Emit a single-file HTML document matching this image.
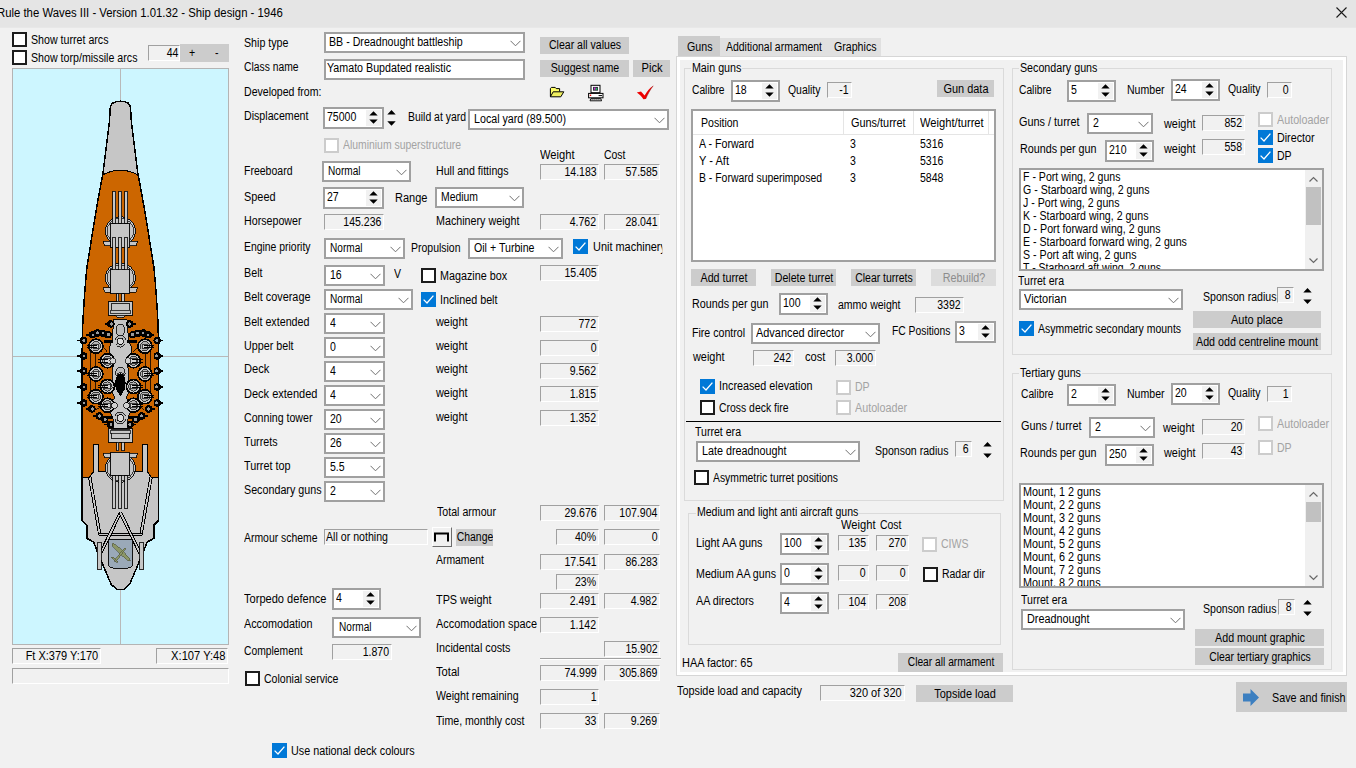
<!DOCTYPE html>
<html lang="en"><head><meta charset="utf-8"><title>Rule the Waves III - Ship design</title>
<style>
html,body{margin:0;padding:0}
body{width:1356px;height:768px;overflow:hidden;background:#f1f1f1;position:relative;font:12px/14px "Liberation Sans",sans-serif;color:#000}
body *{box-sizing:border-box}
div,span.t,svg.abs,i{position:absolute}
.t{white-space:nowrap;font:12px/14px "Liberation Sans",sans-serif;transform:scaleX(.878);transform-origin:0 0;display:block}
.t.r{transform-origin:100% 0}
.t.g{color:#a3a3a3}
.t.gl{background:#f1f1f1;padding:0 1px;margin-left:-1px}
#title{left:0;top:0;width:1356px;height:28px;background:#e5e5e5;border-bottom:1px solid #e8e8e8}
#title .tt{position:absolute;left:-3px;top:5px;font:12px/16px "Liberation Sans",sans-serif;white-space:nowrap;transform:scaleX(.945);transform-origin:0 0}
#close{position:absolute;left:1336px;top:7px}
.cb,.sp,.inp,.lb{border:2px solid #a0a0a0;background:#fff;overflow:hidden}
.chev{position:absolute;right:2.5px;top:5.5px}
.sp .sb{right:1px;top:1px;bottom:1px;width:15px;background:#f1f1f1}
.sp .arr{position:absolute;left:3px;top:0px}
.ro{border:1px solid;border-color:#a0a0a0 #fff #fff #a0a0a0;background:#f1f1f1;overflow:hidden}
.btn{background:#cccccc;overflow:hidden}
.btn .c{position:absolute;left:50%;top:50%;white-space:nowrap;transform:translate(-50%,-50%) scaleX(.878);line-height:14px}
.btn.dis{background:#dcdcdc;color:#8c8c8c}
.k{background:#fff}
.k0{border:2px solid #1c1c1c}
.k1{background:#0078d7}
.k1 svg{position:absolute;left:0;top:0}
.k2{border:2px solid #cccccc}
.gb{border:1px solid #dadada}
.tab{background:#e0e0e0}
.tab.sel{background:#cccccc}
.tabpanel{background:#fff;border:1px solid #d6d6d6}
.tabinner{left:3px;top:3px;right:3px;bottom:3px;background:#f1f1f1}
.raised{border:1px solid;border-color:#fff #6d6d6d #6d6d6d #fff;background:#f0f0f0}
.hsep{border-top:1px solid #a0a0a0;border-bottom:1px solid #fff}
.bline{background:#000}
.lvh{left:0;top:0;right:0;height:24px;border-bottom:1px solid #e5e5e5;background:#fff}
.lvs{top:0;width:1px;height:24px;background:#e5e5e5}
.sbar{right:0;top:0;bottom:0;width:17px;background:#f0f0f0}
.thumb{left:1px;width:15px;background:#c1c1c1}

</style></head>
<body>
<div id="title"><span class="tt">Rule the Waves III - Version 1.01.32 - Ship design - 1946</span><svg id="close" width="11" height="11" viewBox="0 0 11 11"><path d="M0.5 0.5 L10.5 10.5 M10.5 0.5 L0.5 10.5" stroke="#1a1a1a" stroke-width="1.1" fill="none"/></svg></div>
<!-- left: ship view -->
<div class="k k0" style="left:12px;top:32px;width:15px;height:15px;"></div>
<span class="t " style="left:31px;top:33px;transform:scaleX(0.887)">Show turret arcs</span>
<div class="k k0" style="left:12px;top:50px;width:15px;height:15px;"></div>
<span class="t " style="left:31px;top:51px;transform:scaleX(0.887)">Show torp/missile arcs</span>
<div class="ro" style="left:148px;top:45px;width:32px;height:16px;"><span class="t r" style="right:1px;top:0px">44</span></div>
<div class="btn" style="left:180px;top:44px;width:48.5px;height:17.5px;"><span class="t" style="left:9px;top:2px">+</span><span class="t" style="left:34.5px;top:2px">-</span></div>
<svg id="ship" width="217" height="577" viewBox="12 68 217 577" style="position:absolute;left:12px;top:68px"><rect x="12" y="68" width="217" height="577" fill="#cdf6ff"/><path d="M120.5 68 V101 M120.5 590 V645 M12 356.5 H82 M159 356.5 H229" stroke="#b9b9b9" stroke-width="1" fill="none"/><g shape-rendering="crispEdges"><defs><clipPath id="hc"><path d="M120.4 101.2 L116.4 101.6 L112.8 103 L111.1 105 L110.3 107.5 L109.4 121.5 L107.2 140 L105 157 L103 173 L99.8 190 L97.1 205 L94.6 220 L92.1 235 L89.4 252 L86.8 268 L85.3 285 L84.3 298.8 L83.4 312 L82.7 325 L82.3 345 L82.1 360 L82.1 520.3 L86.8 525 L86.8 538.3 L93.6 542 L97.3 551.5 L101.9 562.5 L111.2 584.4 L116.8 589.4 L124 589.4 L129.6 584.4 L138.9 562.5 L143.5 551.5 L147.2 542 L154 538.3 L154 525 L158.7 520.3 L158.7 360 L158.5 345 L158.1 325 L157.4 312 L156.5 298.8 L155.5 285 L154 268 L151.4 252 L148.7 235 L146.2 220 L143.7 205 L141 190 L137.8 173 L135.8 157 L133.6 140 L131.4 121.5 L130.5 107.5 L129.7 105 L128 103 L124.4 101.6 L120.4 101.2 Z"/></clipPath></defs><path d="M120.4 101.2 L116.4 101.6 L112.8 103 L111.1 105 L110.3 107.5 L109.4 121.5 L107.2 140 L105 157 L103 173 L99.8 190 L97.1 205 L94.6 220 L92.1 235 L89.4 252 L86.8 268 L85.3 285 L84.3 298.8 L83.4 312 L82.7 325 L82.3 345 L82.1 360 L82.1 520.3 L86.8 525 L86.8 538.3 L93.6 542 L97.3 551.5 L101.9 562.5 L111.2 584.4 L116.8 589.4 L124 589.4 L129.6 584.4 L138.9 562.5 L143.5 551.5 L147.2 542 L154 538.3 L154 525 L158.7 520.3 L158.7 360 L158.5 345 L158.1 325 L157.4 312 L156.5 298.8 L155.5 285 L154 268 L151.4 252 L148.7 235 L146.2 220 L143.7 205 L141 190 L137.8 173 L135.8 157 L133.6 140 L131.4 121.5 L130.5 107.5 L129.7 105 L128 103 L124.4 101.6 L120.4 101.2 Z" fill="#c6c6c6"/><path clip-path="url(#hc)" d="M70 176 L102.5 174.8 Q120.4 165.6 138.3 174.8 L170 176 V477 H70 Z" fill="#cc6600"/><path d="M102.8 174.8 Q120.4 165.6 138 174.8" fill="none" stroke="#000" stroke-width="1"/><path clip-path="url(#hc)" d="M82 477.3 L89.5 477.3 L93.4 471.7 L93.4 444.7 L98.8 444.7 L98.8 471.7 L142.1 471.7 L142.1 444.7 L147.5 444.7 L147.5 471.7 L151.3 477.3 L159 477.3 L159 500 L82 500 Z" fill="#c6c6c6"/><path clip-path="url(#hc)" d="M82 477.3 L89.5 477.3 L93.4 471.7 L93.4 444.7 L98.8 444.7 L98.8 471.7 L142.1 471.7 L142.1 444.7 L147.5 444.7 L147.5 471.7 L151.3 477.3 L159 477.3" fill="none" stroke="#000" stroke-width="1.2"/><path d="M120.4 101.2 L116.4 101.6 L112.8 103 L111.1 105 L110.3 107.5 L109.4 121.5 L107.2 140 L105 157 L103 173 L99.8 190 L97.1 205 L94.6 220 L92.1 235 L89.4 252 L86.8 268 L85.3 285 L84.3 298.8 L83.4 312 L82.7 325 L82.3 345 L82.1 360 L82.1 520.3 L86.8 525 L86.8 538.3 L93.6 542 L97.3 551.5 L101.9 562.5 L111.2 584.4 L116.8 589.4 L124 589.4 L129.6 584.4 L138.9 562.5 L143.5 551.5 L147.2 542 L154 538.3 L154 525 L158.7 520.3 L158.7 360 L158.5 345 L158.1 325 L157.4 312 L156.5 298.8 L155.5 285 L154 268 L151.4 252 L148.7 235 L146.2 220 L143.7 205 L141 190 L137.8 173 L135.8 157 L133.6 140 L131.4 121.5 L130.5 107.5 L129.7 105 L128 103 L124.4 101.6 L120.4 101.2 Z" fill="none" stroke="#000" stroke-width="1.5"/><ellipse cx="120.4" cy="231" rx="15.2" ry="14.4" fill="#c6c6c6" stroke="#000" stroke-width="0.9"/><ellipse cx="120.4" cy="231" rx="13.4" ry="12.8" fill="#c6c6c6" stroke="#000" stroke-width="0.7"/><path d="M110.9 241.1 L103.2 241.1 L104.8 245.9 L110.9 245.9 Z" fill="#c6c6c6" stroke="#000" stroke-width="0.8"/><path d="M129.9 241.1 L137.6 241.1 L136 245.9 L129.9 245.9 Z" fill="#c6c6c6" stroke="#000" stroke-width="0.8"/><rect x="110.9" y="223.4" width="19" height="23.6" fill="#c6c6c6" stroke="#000" stroke-width="0.9"/><rect x="112.9" y="191" width="3" height="32.4" fill="#c6c6c6" stroke="#000" stroke-width="0.8"/><rect x="118.9" y="191" width="3" height="32.4" fill="#c6c6c6" stroke="#000" stroke-width="0.8"/><rect x="124.9" y="191" width="3" height="32.4" fill="#c6c6c6" stroke="#000" stroke-width="0.8"/><ellipse cx="120.4" cy="277.5" rx="15.2" ry="14.4" fill="#c6c6c6" stroke="#000" stroke-width="0.9"/><ellipse cx="120.4" cy="277.5" rx="13.4" ry="12.8" fill="#c6c6c6" stroke="#000" stroke-width="0.7"/><path d="M110.9 287.6 L103.2 287.6 L104.8 292.4 L110.9 292.4 Z" fill="#c6c6c6" stroke="#000" stroke-width="0.8"/><path d="M129.9 287.6 L137.6 287.6 L136 292.4 L129.9 292.4 Z" fill="#c6c6c6" stroke="#000" stroke-width="0.8"/><rect x="110.9" y="269.9" width="19" height="23.6" fill="#c6c6c6" stroke="#000" stroke-width="0.9"/><rect x="112.9" y="237.5" width="3" height="32.4" fill="#c6c6c6" stroke="#000" stroke-width="0.8"/><rect x="118.9" y="237.5" width="3" height="32.4" fill="#c6c6c6" stroke="#000" stroke-width="0.8"/><rect x="124.9" y="237.5" width="3" height="32.4" fill="#c6c6c6" stroke="#000" stroke-width="0.8"/><rect x="108.4" y="301.5" width="24.4" height="13.5" fill="#c6c6c6" stroke="#000" stroke-width="0.9"/><rect x="111.6" y="303.5" width="18" height="8.5" fill="#c6c6c6" stroke="#000" stroke-width="0.8"/><rect x="110.4" y="310.1" width="20" height="3.2" fill="#c6c6c6" stroke="#000" stroke-width="0.7"/><path d="M114 315 Q120.4 320.5 126.8 315 Z" fill="#c6c6c6" stroke="#000" stroke-width="0.8"/><rect x="116.7" y="293.6" width="2.2" height="7.9" fill="#c6c6c6" stroke="#000" stroke-width="0.8"/><rect x="121.9" y="293.6" width="2.2" height="7.9" fill="#c6c6c6" stroke="#000" stroke-width="0.8"/><rect x="108.4" y="428.8" width="24.4" height="13.5" fill="#c6c6c6" stroke="#000" stroke-width="0.9"/><rect x="111.6" y="429.8" width="18" height="8.5" fill="#c6c6c6" stroke="#000" stroke-width="0.8"/><rect x="110.4" y="430" width="20" height="3.2" fill="#c6c6c6" stroke="#000" stroke-width="0.7"/><path d="M114 428.8 Q120.4 423.3 126.8 428.8 Z" fill="#c6c6c6" stroke="#000" stroke-width="0.8"/><ellipse cx="120.4" cy="468" rx="15.2" ry="14.4" fill="#c6c6c6" stroke="#000" stroke-width="0.9"/><ellipse cx="120.4" cy="468" rx="13.4" ry="12.8" fill="#c6c6c6" stroke="#000" stroke-width="0.7"/><path d="M110.9 453.1 L103.2 453.1 L104.8 457.9 L110.9 457.9 Z" fill="#c6c6c6" stroke="#000" stroke-width="0.8"/><path d="M129.9 453.1 L137.6 453.1 L136 457.9 L129.9 457.9 Z" fill="#c6c6c6" stroke="#000" stroke-width="0.8"/><rect x="110.9" y="452" width="19" height="23.6" fill="#c6c6c6" stroke="#000" stroke-width="0.9"/><rect x="112.9" y="475.6" width="3" height="32.4" fill="#c6c6c6" stroke="#000" stroke-width="0.8"/><rect x="118.9" y="475.6" width="3" height="32.4" fill="#c6c6c6" stroke="#000" stroke-width="0.8"/><rect x="124.9" y="475.6" width="3" height="32.4" fill="#c6c6c6" stroke="#000" stroke-width="0.8"/><rect x="116.7" y="442.3" width="2.2" height="8.2" fill="#c6c6c6" stroke="#000" stroke-width="0.8"/><rect x="121.9" y="442.3" width="2.2" height="8.2" fill="#c6c6c6" stroke="#000" stroke-width="0.8"/><path d="M113.4 319.5 L127.4 319.5 L128.4 340 L131.4 347 L131.4 352 L126.4 360 L128.8 372 L128.8 392 L126 398 L131.6 404 L131.6 410 L127.6 418 L127.6 428 L113.2 428 L113.2 418 L109.2 410 L109.2 404 L114.8 398 L112 392 L112 372 L114.4 360 L109.4 352 L109.4 347 L112.4 340 Z" fill="#c6c6c6" stroke="#000" stroke-width="0.9"/><path d="M95.1 346 L95.1 398" fill="none" stroke="#000" stroke-width="0.8"/><path d="M90.2 350 L90.2 396" fill="none" stroke="#000" stroke-width="0.8"/><path d="M107.4 352 L96.4 340" fill="none" stroke="#000" stroke-width="0.8"/><path d="M107.4 400 L96.4 410" fill="none" stroke="#000" stroke-width="0.8"/><path d="M145.7 346 L145.7 398" fill="none" stroke="#000" stroke-width="0.8"/><path d="M150.6 350 L150.6 396" fill="none" stroke="#000" stroke-width="0.8"/><path d="M133.4 352 L144.4 340" fill="none" stroke="#000" stroke-width="0.8"/><path d="M133.4 400 L144.4 410" fill="none" stroke="#000" stroke-width="0.8"/><ellipse cx="95.9" cy="346.2" rx="7" ry="7" fill="#c6c6c6" stroke="#000" stroke-width="1.7"/><ellipse cx="95.9" cy="346.2" rx="4.6" ry="4.6" fill="#b4b4b4" stroke="#000" stroke-width="0.7"/><rect x="93.1" y="344" width="5.6" height="4.4" fill="#d6d6d6" stroke="#000" stroke-width="0.7"/><path d="M96.9 345.2 L86.7 345.2" fill="none" stroke="#000" stroke-width="1.0"/><path d="M96.9 347.4 L86.7 347.4" fill="none" stroke="#000" stroke-width="1.0"/><ellipse cx="144.9" cy="346.2" rx="7" ry="7" fill="#c6c6c6" stroke="#000" stroke-width="1.7"/><ellipse cx="144.9" cy="346.2" rx="4.6" ry="4.6" fill="#b4b4b4" stroke="#000" stroke-width="0.7"/><rect x="142.1" y="344" width="5.6" height="4.4" fill="#d6d6d6" stroke="#000" stroke-width="0.7"/><path d="M143.9 345.2 L154.1 345.2" fill="none" stroke="#000" stroke-width="1.0"/><path d="M143.9 347.4 L154.1 347.4" fill="none" stroke="#000" stroke-width="1.0"/><ellipse cx="95.9" cy="374" rx="7" ry="7" fill="#c6c6c6" stroke="#000" stroke-width="1.7"/><ellipse cx="95.9" cy="374" rx="4.6" ry="4.6" fill="#b4b4b4" stroke="#000" stroke-width="0.7"/><rect x="93.1" y="371.8" width="5.6" height="4.4" fill="#d6d6d6" stroke="#000" stroke-width="0.7"/><path d="M96.9 373 L86.7 373" fill="none" stroke="#000" stroke-width="1.0"/><path d="M96.9 375.2 L86.7 375.2" fill="none" stroke="#000" stroke-width="1.0"/><ellipse cx="144.9" cy="374" rx="7" ry="7" fill="#c6c6c6" stroke="#000" stroke-width="1.7"/><ellipse cx="144.9" cy="374" rx="4.6" ry="4.6" fill="#b4b4b4" stroke="#000" stroke-width="0.7"/><rect x="142.1" y="371.8" width="5.6" height="4.4" fill="#d6d6d6" stroke="#000" stroke-width="0.7"/><path d="M143.9 373 L154.1 373" fill="none" stroke="#000" stroke-width="1.0"/><path d="M143.9 375.2 L154.1 375.2" fill="none" stroke="#000" stroke-width="1.0"/><ellipse cx="95.9" cy="396.7" rx="7" ry="7" fill="#c6c6c6" stroke="#000" stroke-width="1.7"/><ellipse cx="95.9" cy="396.7" rx="4.6" ry="4.6" fill="#b4b4b4" stroke="#000" stroke-width="0.7"/><rect x="93.1" y="394.5" width="5.6" height="4.4" fill="#d6d6d6" stroke="#000" stroke-width="0.7"/><path d="M96.9 395.7 L86.7 395.7" fill="none" stroke="#000" stroke-width="1.0"/><path d="M96.9 397.9 L86.7 397.9" fill="none" stroke="#000" stroke-width="1.0"/><ellipse cx="144.9" cy="396.7" rx="7" ry="7" fill="#c6c6c6" stroke="#000" stroke-width="1.7"/><ellipse cx="144.9" cy="396.7" rx="4.6" ry="4.6" fill="#b4b4b4" stroke="#000" stroke-width="0.7"/><rect x="142.1" y="394.5" width="5.6" height="4.4" fill="#d6d6d6" stroke="#000" stroke-width="0.7"/><path d="M143.9 395.7 L154.1 395.7" fill="none" stroke="#000" stroke-width="1.0"/><path d="M143.9 397.9 L154.1 397.9" fill="none" stroke="#000" stroke-width="1.0"/><ellipse cx="107.4" cy="360.8" rx="7" ry="7" fill="#c6c6c6" stroke="#000" stroke-width="1.7"/><ellipse cx="107.4" cy="360.8" rx="4.6" ry="4.6" fill="#b4b4b4" stroke="#000" stroke-width="0.7"/><rect x="104.6" y="358.6" width="5.6" height="4.4" fill="#d6d6d6" stroke="#000" stroke-width="0.7"/><path d="M108.4 359.8 L98.2 359.8" fill="none" stroke="#000" stroke-width="1.0"/><path d="M108.4 362 L98.2 362" fill="none" stroke="#000" stroke-width="1.0"/><ellipse cx="133.4" cy="360.8" rx="7" ry="7" fill="#c6c6c6" stroke="#000" stroke-width="1.7"/><ellipse cx="133.4" cy="360.8" rx="4.6" ry="4.6" fill="#b4b4b4" stroke="#000" stroke-width="0.7"/><rect x="130.6" y="358.6" width="5.6" height="4.4" fill="#d6d6d6" stroke="#000" stroke-width="0.7"/><path d="M132.4 359.8 L142.6 359.8" fill="none" stroke="#000" stroke-width="1.0"/><path d="M132.4 362 L142.6 362" fill="none" stroke="#000" stroke-width="1.0"/><ellipse cx="107.4" cy="386.5" rx="7" ry="7" fill="#c6c6c6" stroke="#000" stroke-width="1.7"/><ellipse cx="107.4" cy="386.5" rx="4.6" ry="4.6" fill="#b4b4b4" stroke="#000" stroke-width="0.7"/><rect x="104.6" y="384.3" width="5.6" height="4.4" fill="#d6d6d6" stroke="#000" stroke-width="0.7"/><path d="M108.4 385.5 L98.2 385.5" fill="none" stroke="#000" stroke-width="1.0"/><path d="M108.4 387.7 L98.2 387.7" fill="none" stroke="#000" stroke-width="1.0"/><ellipse cx="133.4" cy="386.5" rx="7" ry="7" fill="#c6c6c6" stroke="#000" stroke-width="1.7"/><ellipse cx="133.4" cy="386.5" rx="4.6" ry="4.6" fill="#b4b4b4" stroke="#000" stroke-width="0.7"/><rect x="130.6" y="384.3" width="5.6" height="4.4" fill="#d6d6d6" stroke="#000" stroke-width="0.7"/><path d="M132.4 385.5 L142.6 385.5" fill="none" stroke="#000" stroke-width="1.0"/><path d="M132.4 387.7 L142.6 387.7" fill="none" stroke="#000" stroke-width="1.0"/><ellipse cx="107.4" cy="405.3" rx="7" ry="7" fill="#c6c6c6" stroke="#000" stroke-width="1.7"/><ellipse cx="107.4" cy="405.3" rx="4.6" ry="4.6" fill="#b4b4b4" stroke="#000" stroke-width="0.7"/><rect x="104.6" y="403.1" width="5.6" height="4.4" fill="#d6d6d6" stroke="#000" stroke-width="0.7"/><path d="M108.4 404.3 L98.2 404.3" fill="none" stroke="#000" stroke-width="1.0"/><path d="M108.4 406.5 L98.2 406.5" fill="none" stroke="#000" stroke-width="1.0"/><ellipse cx="133.4" cy="405.3" rx="7" ry="7" fill="#c6c6c6" stroke="#000" stroke-width="1.7"/><ellipse cx="133.4" cy="405.3" rx="4.6" ry="4.6" fill="#b4b4b4" stroke="#000" stroke-width="0.7"/><rect x="130.6" y="403.1" width="5.6" height="4.4" fill="#d6d6d6" stroke="#000" stroke-width="0.7"/><path d="M132.4 404.3 L142.6 404.3" fill="none" stroke="#000" stroke-width="1.0"/><path d="M132.4 406.5 L142.6 406.5" fill="none" stroke="#000" stroke-width="1.0"/><ellipse cx="120.4" cy="341.3" rx="5.4" ry="5.8" fill="#b9b9b9" stroke="#000" stroke-width="0.8"/><ellipse cx="120.4" cy="341.3" rx="3.2" ry="3.2" fill="#dcdcdc" stroke="#000" stroke-width="0.8"/><ellipse cx="120.4" cy="418" rx="5.6" ry="6" fill="#b9b9b9" stroke="#000" stroke-width="0.8"/><ellipse cx="120.4" cy="418" rx="3.4" ry="3.4" fill="#dcdcdc" stroke="#000" stroke-width="0.8"/><ellipse cx="112.8" cy="360.8" rx="3" ry="3" fill="#d2d2d2" stroke="#000" stroke-width="0.7"/><ellipse cx="114.4" cy="405.6" rx="3" ry="3" fill="#d2d2d2" stroke="#000" stroke-width="0.7"/><ellipse cx="128" cy="360.8" rx="3" ry="3" fill="#d2d2d2" stroke="#000" stroke-width="0.7"/><ellipse cx="126.4" cy="405.6" rx="3" ry="3" fill="#d2d2d2" stroke="#000" stroke-width="0.7"/><ellipse cx="120.4" cy="372.5" rx="4.6" ry="5.4" fill="#bdbdbd" stroke="#000" stroke-width="0.8"/><ellipse cx="120.4" cy="376" rx="3.4" ry="3.6" fill="#d2d2d2" stroke="#000" stroke-width="0.7"/><ellipse cx="120.4" cy="330" rx="4.4" ry="6" fill="#bdbdbd" stroke="#000" stroke-width="0.8"/><rect x="103.8" y="340.4" width="33.2" height="3" fill="#000" stroke="#000" stroke-width="0"/><rect x="104.8" y="416.4" width="31.2" height="2.6" fill="#000" stroke="#000" stroke-width="0"/><rect x="113.4" y="340.2" width="14" height="3.4" fill="#c6c6c6"/><ellipse cx="120.4" cy="341.3" rx="3.2" ry="3.2" fill="#dcdcdc" stroke="#000" stroke-width="0.8"/><rect x="113.2" y="416" width="14.4" height="3.4" fill="#c6c6c6"/><ellipse cx="120.4" cy="418" rx="3.4" ry="3.4" fill="#dcdcdc" stroke="#000" stroke-width="0.8"/><ellipse cx="120.4" cy="383.4" rx="5.2" ry="10.2" fill="#000" stroke="#000" stroke-width="0"/><path d="M115.4 388 L120.4 396.5 L125.4 388 Z" fill="#000"/><ellipse cx="83.6" cy="340.5" rx="3.7" ry="3.7" fill="#000" stroke="#000" stroke-width="0"/><ellipse cx="84" cy="340.5" rx="1.5" ry="1.6" fill="#9a9a9a" stroke="#000" stroke-width="0"/><path d="M81.6 340.5 L77.4 340.5" fill="none" stroke="#000" stroke-width="1.6"/><ellipse cx="157.2" cy="340.5" rx="3.7" ry="3.7" fill="#000" stroke="#000" stroke-width="0"/><ellipse cx="156.8" cy="340.5" rx="1.5" ry="1.6" fill="#9a9a9a" stroke="#000" stroke-width="0"/><path d="M159.2 340.5 L163.4 340.5" fill="none" stroke="#000" stroke-width="1.6"/><ellipse cx="83.6" cy="356" rx="3.7" ry="3.7" fill="#000" stroke="#000" stroke-width="0"/><ellipse cx="84" cy="356" rx="1.5" ry="1.6" fill="#9a9a9a" stroke="#000" stroke-width="0"/><path d="M81.6 356 L77.4 356" fill="none" stroke="#000" stroke-width="1.6"/><ellipse cx="157.2" cy="356" rx="3.7" ry="3.7" fill="#000" stroke="#000" stroke-width="0"/><ellipse cx="156.8" cy="356" rx="1.5" ry="1.6" fill="#9a9a9a" stroke="#000" stroke-width="0"/><path d="M159.2 356 L163.4 356" fill="none" stroke="#000" stroke-width="1.6"/><ellipse cx="83.6" cy="371" rx="3.7" ry="3.7" fill="#000" stroke="#000" stroke-width="0"/><ellipse cx="84" cy="371" rx="1.5" ry="1.6" fill="#9a9a9a" stroke="#000" stroke-width="0"/><path d="M81.6 371 L77.4 371" fill="none" stroke="#000" stroke-width="1.6"/><ellipse cx="157.2" cy="371" rx="3.7" ry="3.7" fill="#000" stroke="#000" stroke-width="0"/><ellipse cx="156.8" cy="371" rx="1.5" ry="1.6" fill="#9a9a9a" stroke="#000" stroke-width="0"/><path d="M159.2 371 L163.4 371" fill="none" stroke="#000" stroke-width="1.6"/><ellipse cx="83.6" cy="387" rx="3.7" ry="3.7" fill="#000" stroke="#000" stroke-width="0"/><ellipse cx="84" cy="387" rx="1.5" ry="1.6" fill="#9a9a9a" stroke="#000" stroke-width="0"/><path d="M81.6 387 L77.4 387" fill="none" stroke="#000" stroke-width="1.6"/><ellipse cx="157.2" cy="387" rx="3.7" ry="3.7" fill="#000" stroke="#000" stroke-width="0"/><ellipse cx="156.8" cy="387" rx="1.5" ry="1.6" fill="#9a9a9a" stroke="#000" stroke-width="0"/><path d="M159.2 387 L163.4 387" fill="none" stroke="#000" stroke-width="1.6"/><ellipse cx="83.6" cy="403" rx="3.7" ry="3.7" fill="#000" stroke="#000" stroke-width="0"/><ellipse cx="84" cy="403" rx="1.5" ry="1.6" fill="#9a9a9a" stroke="#000" stroke-width="0"/><path d="M81.6 403 L77.4 403" fill="none" stroke="#000" stroke-width="1.6"/><ellipse cx="157.2" cy="403" rx="3.7" ry="3.7" fill="#000" stroke="#000" stroke-width="0"/><ellipse cx="156.8" cy="403" rx="1.5" ry="1.6" fill="#9a9a9a" stroke="#000" stroke-width="0"/><path d="M159.2 403 L163.4 403" fill="none" stroke="#000" stroke-width="1.6"/><ellipse cx="111" cy="324" rx="3.7" ry="3.7" fill="#000" stroke="#000" stroke-width="0"/><ellipse cx="111.4" cy="324" rx="1.5" ry="1.6" fill="#9a9a9a" stroke="#000" stroke-width="0"/><path d="M109 324 L104.8 324" fill="none" stroke="#000" stroke-width="1.6"/><ellipse cx="129.8" cy="324" rx="3.7" ry="3.7" fill="#000" stroke="#000" stroke-width="0"/><ellipse cx="129.4" cy="324" rx="1.5" ry="1.6" fill="#9a9a9a" stroke="#000" stroke-width="0"/><path d="M131.8 324 L136 324" fill="none" stroke="#000" stroke-width="1.6"/><ellipse cx="102.8" cy="333.4" rx="3.7" ry="3.7" fill="#000" stroke="#000" stroke-width="0"/><ellipse cx="103.2" cy="333.4" rx="1.5" ry="1.6" fill="#9a9a9a" stroke="#000" stroke-width="0"/><path d="M100.8 333.4 L96.6 333.4" fill="none" stroke="#000" stroke-width="1.6"/><ellipse cx="138" cy="333.4" rx="3.7" ry="3.7" fill="#000" stroke="#000" stroke-width="0"/><ellipse cx="137.6" cy="333.4" rx="1.5" ry="1.6" fill="#9a9a9a" stroke="#000" stroke-width="0"/><path d="M140 333.4 L144.2 333.4" fill="none" stroke="#000" stroke-width="1.6"/><ellipse cx="108" cy="334.6" rx="3.7" ry="3.7" fill="#000" stroke="#000" stroke-width="0"/><ellipse cx="108.4" cy="334.6" rx="1.5" ry="1.6" fill="#9a9a9a" stroke="#000" stroke-width="0"/><path d="M106 334.6 L101.8 334.6" fill="none" stroke="#000" stroke-width="1.6"/><ellipse cx="132.8" cy="334.6" rx="3.7" ry="3.7" fill="#000" stroke="#000" stroke-width="0"/><ellipse cx="132.4" cy="334.6" rx="1.5" ry="1.6" fill="#9a9a9a" stroke="#000" stroke-width="0"/><path d="M134.8 334.6 L139 334.6" fill="none" stroke="#000" stroke-width="1.6"/><ellipse cx="92.6" cy="334.7" rx="3.7" ry="3.7" fill="#000" stroke="#000" stroke-width="0"/><ellipse cx="93" cy="334.7" rx="1.5" ry="1.6" fill="#9a9a9a" stroke="#000" stroke-width="0"/><path d="M90.6 334.7 L86.4 334.7" fill="none" stroke="#000" stroke-width="1.6"/><ellipse cx="148.2" cy="334.7" rx="3.7" ry="3.7" fill="#000" stroke="#000" stroke-width="0"/><ellipse cx="147.8" cy="334.7" rx="1.5" ry="1.6" fill="#9a9a9a" stroke="#000" stroke-width="0"/><path d="M150.2 334.7 L154.4 334.7" fill="none" stroke="#000" stroke-width="1.6"/><ellipse cx="97.4" cy="333" rx="3.7" ry="3.7" fill="#000" stroke="#000" stroke-width="0"/><ellipse cx="97.8" cy="333" rx="1.5" ry="1.6" fill="#9a9a9a" stroke="#000" stroke-width="0"/><path d="M95.4 333 L91.2 333" fill="none" stroke="#000" stroke-width="1.6"/><ellipse cx="143.4" cy="333" rx="3.7" ry="3.7" fill="#000" stroke="#000" stroke-width="0"/><ellipse cx="143" cy="333" rx="1.5" ry="1.6" fill="#9a9a9a" stroke="#000" stroke-width="0"/><path d="M145.4 333 L149.6 333" fill="none" stroke="#000" stroke-width="1.6"/><ellipse cx="92" cy="409" rx="3.7" ry="3.7" fill="#000" stroke="#000" stroke-width="0"/><ellipse cx="92.4" cy="409" rx="1.5" ry="1.6" fill="#9a9a9a" stroke="#000" stroke-width="0"/><path d="M90 409 L85.8 409" fill="none" stroke="#000" stroke-width="1.6"/><ellipse cx="148.8" cy="409" rx="3.7" ry="3.7" fill="#000" stroke="#000" stroke-width="0"/><ellipse cx="148.4" cy="409" rx="1.5" ry="1.6" fill="#9a9a9a" stroke="#000" stroke-width="0"/><path d="M150.8 409 L155 409" fill="none" stroke="#000" stroke-width="1.6"/><ellipse cx="99.2" cy="416" rx="3.7" ry="3.7" fill="#000" stroke="#000" stroke-width="0"/><ellipse cx="99.6" cy="416" rx="1.5" ry="1.6" fill="#9a9a9a" stroke="#000" stroke-width="0"/><path d="M97.2 416 L93 416" fill="none" stroke="#000" stroke-width="1.6"/><ellipse cx="141.6" cy="416" rx="3.7" ry="3.7" fill="#000" stroke="#000" stroke-width="0"/><ellipse cx="141.2" cy="416" rx="1.5" ry="1.6" fill="#9a9a9a" stroke="#000" stroke-width="0"/><path d="M143.6 416 L147.8 416" fill="none" stroke="#000" stroke-width="1.6"/><ellipse cx="104.8" cy="419.5" rx="3.7" ry="3.7" fill="#000" stroke="#000" stroke-width="0"/><ellipse cx="105.2" cy="419.5" rx="1.5" ry="1.6" fill="#9a9a9a" stroke="#000" stroke-width="0"/><path d="M102.8 419.5 L98.6 419.5" fill="none" stroke="#000" stroke-width="1.6"/><ellipse cx="136" cy="419.5" rx="3.7" ry="3.7" fill="#000" stroke="#000" stroke-width="0"/><ellipse cx="135.6" cy="419.5" rx="1.5" ry="1.6" fill="#9a9a9a" stroke="#000" stroke-width="0"/><path d="M138 419.5 L142.2 419.5" fill="none" stroke="#000" stroke-width="1.6"/><ellipse cx="110.6" cy="424.4" rx="3.7" ry="3.7" fill="#000" stroke="#000" stroke-width="0"/><ellipse cx="111" cy="424.4" rx="1.5" ry="1.6" fill="#9a9a9a" stroke="#000" stroke-width="0"/><path d="M108.6 424.4 L104.4 424.4" fill="none" stroke="#000" stroke-width="1.6"/><ellipse cx="130.2" cy="424.4" rx="3.7" ry="3.7" fill="#000" stroke="#000" stroke-width="0"/><ellipse cx="129.8" cy="424.4" rx="1.5" ry="1.6" fill="#9a9a9a" stroke="#000" stroke-width="0"/><path d="M132.2 424.4 L136.4 424.4" fill="none" stroke="#000" stroke-width="1.6"/><path d="M89.8 477.5 L99.8 534.6" fill="none" stroke="#000" stroke-width="3.4"/><path d="M89.8 477.5 L99.8 534.6" fill="none" stroke="#c6c6c6" stroke-width="1.5"/><path d="M151 477.5 L141 534.6" fill="none" stroke="#000" stroke-width="3.4"/><path d="M151 477.5 L141 534.6" fill="none" stroke="#c6c6c6" stroke-width="1.5"/><path d="M99 534.6 L141.8 534.6" fill="none" stroke="#000" stroke-width="3.4"/><path d="M99 534.6 L141.8 534.6" fill="none" stroke="#c6c6c6" stroke-width="1.5"/><path d="M120.4 512.6 L100.8 553" fill="none" stroke="#000" stroke-width="3.4"/><path d="M120.4 512.6 L100.8 553" fill="none" stroke="#c6c6c6" stroke-width="1.5"/><path d="M120.4 512.6 L140 553" fill="none" stroke="#000" stroke-width="3.4"/><path d="M120.4 512.6 L140 553" fill="none" stroke="#c6c6c6" stroke-width="1.5"/><rect x="97" y="542.2" width="4" height="27.4" fill="#c6c6c6" stroke="#000" stroke-width="0.8"/><rect x="139.8" y="542.2" width="4" height="27.4" fill="#c6c6c6" stroke="#000" stroke-width="0.8"/><path d="M108.4 539.4 H132.4 V563.5 Q132.4 568 127.9 568 H112.9 Q108.4 568 108.4 563.5 Z" fill="#9aa9b8" stroke="#000" stroke-width="0.9"/><g stroke="#4c5238" stroke-width="0.6" fill="#8c9767"><path d="M112.2 544 L113.6 543.4 L121.6 549.6 L129.8 558.8 L130.2 560.6 L128.2 560.8 L119.4 553.4 L112 545.6 Z"/><path d="M124.8 547.6 L125.8 548.8 L117 560.2 L114.8 562 L114.4 561 L116 558.4 Z"/><path d="M111.4 557.6 L113 557 L117.8 561.4 L117 562.6 Z"/></g></g><rect x="12.5" y="68.5" width="216" height="576" fill="none" stroke="#b4b4b4" stroke-width="1"/></svg>
<div class="ro" style="left:12px;top:648px;width:88.5px;height:16px;"><span class="t r" style="right:1.5px;top:0px;transform:scaleX(0.916)">Ft X:379 Y:170</span></div>
<div class="ro" style="left:156px;top:648px;width:72px;height:16px;"><span class="t r" style="right:1.5px;top:0px;transform:scaleX(0.930)">X:107 Y:48</span></div>
<div class="ro" style="left:12px;top:668px;width:216.5px;height:16px;"><span class="t r" style="right:1.5px;top:0px"></span></div>
<!-- main design column -->
<span class="t " style="left:244px;top:36px;transform:scaleX(0.889)">Ship type</span>
<span class="t " style="left:244px;top:60px;transform:scaleX(0.860)">Class name</span>
<span class="t " style="left:244px;top:85px;transform:scaleX(0.880)">Developed from:</span>
<span class="t " style="left:244px;top:109px;transform:scaleX(0.887)">Displacement</span>
<span class="t " style="left:244px;top:163.5px;transform:scaleX(0.876)">Freeboard</span>
<span class="t " style="left:244px;top:190px;transform:scaleX(0.908)">Speed</span>
<span class="t " style="left:244px;top:214px;transform:scaleX(0.889)">Horsepower</span>
<span class="t " style="left:244px;top:240px;transform:scaleX(0.867)">Engine priority</span>
<span class="t " style="left:244px;top:266px;transform:scaleX(0.895)">Belt</span>
<span class="t " style="left:244px;top:290px;transform:scaleX(0.906)">Belt coverage</span>
<span class="t " style="left:244px;top:315px;transform:scaleX(0.892)">Belt extended</span>
<span class="t " style="left:244px;top:339px;transform:scaleX(0.894)">Upper belt</span>
<span class="t " style="left:244px;top:362px;transform:scaleX(0.930)">Deck</span>
<span class="t " style="left:244px;top:386.5px;transform:scaleX(0.918)">Deck extended</span>
<span class="t " style="left:244px;top:410.5px;transform:scaleX(0.885)">Conning tower</span>
<span class="t " style="left:244px;top:434.5px;transform:scaleX(0.892)">Turrets</span>
<span class="t " style="left:244px;top:458.5px;transform:scaleX(0.902)">Turret top</span>
<span class="t " style="left:244px;top:482.5px;transform:scaleX(0.894)">Secondary guns</span>
<span class="t " style="left:244px;top:530.5px;transform:scaleX(0.868)">Armour scheme</span>
<span class="t " style="left:244px;top:592px;transform:scaleX(0.923)">Torpedo defence</span>
<span class="t " style="left:244px;top:617px;transform:scaleX(0.901)">Accomodation</span>
<span class="t " style="left:244px;top:644px;transform:scaleX(0.860)">Complement</span>
<div class="cb" style="left:324px;top:32px;width:201px;height:21px;"><span class="t" style="left:3px;top:0.5px;transform:scaleX(0.887)">BB - Dreadnought battleship</span><svg class="chev" width="11" height="7" viewBox="0 0 11 7"><path d="M0.5 0.8 L5.5 5.8 L10.5 0.8" fill="none" stroke="#707070" stroke-width="1"/></svg></div>
<div class="inp" style="left:324px;top:59px;width:201px;height:21px;"><span class="t" style="left:1px;top:0px;transform:scaleX(0.891)">Yamato Bupdated realistic</span></div>
<div class="btn " style="left:540px;top:37px;width:89px;height:16.5px;"><span class="c" style="transform:translate(-50%,-50%) scaleX(0.878)">Clear all values</span></div>
<div class="btn " style="left:540px;top:60px;width:89px;height:16.5px;"><span class="c" style="transform:translate(-50%,-50%) scaleX(0.885)">Suggest name</span></div>
<div class="btn " style="left:633px;top:60px;width:37px;height:16.5px;"><span class="c" style="transform:translate(-50%,-50%) scaleX(0.926)">Pick</span></div>
<svg id="icons" width="108" height="19" viewBox="548 84 108 19" style="position:absolute;left:548px;top:84px">
<path d="M550.4 96.6 V88.6 L551.4 87.4 H555.2 L556.2 88.6 H559.6 V91.6" fill="#ffff66" stroke="#000" stroke-width="1"/>
<path d="M550.4 96.8 L553.2 91.8 H563.8 L560.8 96.8 Z" fill="#f0f060" stroke="#000" stroke-width="1"/>
<rect x="591" y="85.3" width="9" height="7.4" fill="#fff" stroke="#000" stroke-width="1"/>
<rect x="593" y="86.9" width="5" height="3.8" fill="#30343c"/>
<rect x="594" y="87.6" width="1.6" height="2" fill="#e020e0"/><rect x="595.6" y="88" width="1.6" height="1.8" fill="#20c060"/>
<rect x="588.6" y="93.4" width="14.4" height="4.4" fill="#fff" stroke="#000" stroke-width="1"/>
<rect x="589.8" y="94.6" width="1.4" height="1.4" fill="#e00000"/><path d="M598.6 95.6 H602" stroke="#000" stroke-width="1"/>
<path d="M590 100.8 L590.8 98.6 H600.8 L601.6 100.8 Z" fill="#fff" stroke="#000" stroke-width="0.9"/>
<path d="M591.6 99.7 H600.4" stroke="#000" stroke-width="0.8" stroke-dasharray="1 1"/>
<path d="M636.8 92.4 L641 91.4 L644.6 95.4 C647 91.4 650 87.6 653.2 85.8 C650.2 89.6 647.6 94.4 645.6 99 L643.4 99.2 C641.6 96.4 639.6 94.2 636.8 92.4 Z" fill="#ee0000"/>
<path d="M645.6 99 C647.6 94.4 650.2 89.6 653.2 85.8" fill="none" stroke="#7a0000" stroke-width="0.5"/>
</svg>

<div class="sp" style="left:323px;top:107px;width:61px;height:22px;"><span class="t" style="left:2px;top:0.5px">75000</span><i class="sb"><svg class="arr" width="9" height="15" viewBox="0 0 9 15"><path d="M0.3 5.6 L4.5 1.2 L8.7 5.6 Z M0.3 9.4 L4.5 13.8 L8.7 9.4 Z" fill="#000"/></svg></i></div>
<svg class="abs" style="left:387px;top:108.5px" width="9" height="18" viewBox="0 0 9 18"><path d="M0.3 5.5 L4.5 1 L8.7 5.5 Z M0.3 12.3 L4.5 16.7 L8.7 12.3 Z" fill="#000"/></svg>
<span class="t " style="left:407.5px;top:110px;transform:scaleX(0.869)">Build at yard</span>
<div class="cb" style="left:468px;top:109px;width:201px;height:21px;"><span class="t" style="left:3.5px;top:0.5px;transform:scaleX(0.890)">Local yard (89.500)</span><svg class="chev" width="11" height="7" viewBox="0 0 11 7"><path d="M0.5 0.8 L5.5 5.8 L10.5 0.8" fill="none" stroke="#707070" stroke-width="1"/></svg></div>
<div class="k k2" style="left:324px;top:138px;width:15px;height:15px;"></div>
<span class="t g" style="left:342.5px;top:138px;transform:scaleX(0.867)">Aluminium superstructure</span>
<span class="t " style="left:539.5px;top:148px;transform:scaleX(0.930)">Weight</span>
<span class="t " style="left:604px;top:148px;transform:scaleX(0.871)">Cost</span>
<div class="cb" style="left:322px;top:161px;width:89px;height:21px;"><span class="t" style="left:3.5px;top:0.5px;transform:scaleX(0.840)">Normal</span><svg class="chev" width="11" height="7" viewBox="0 0 11 7"><path d="M0.5 0.8 L5.5 5.8 L10.5 0.8" fill="none" stroke="#707070" stroke-width="1"/></svg></div>
<span class="t " style="left:436px;top:163.5px;transform:scaleX(0.884)">Hull and fittings</span>
<div class="ro" style="left:540px;top:164px;width:59px;height:16px;"><span class="t r" style="right:1.5px;top:0px">14.183</span></div>
<div class="ro" style="left:604px;top:164px;width:56px;height:16px;"><span class="t r" style="right:1.5px;top:0px">57.585</span></div>
<div class="sp" style="left:323px;top:187px;width:61px;height:22px;"><span class="t" style="left:2px;top:0.5px">27</span><i class="sb"><svg class="arr" width="9" height="15" viewBox="0 0 9 15"><path d="M0.3 5.6 L4.5 1.2 L8.7 5.6 Z M0.3 9.4 L4.5 13.8 L8.7 9.4 Z" fill="#000"/></svg></i></div>
<span class="t " style="left:395px;top:191px;transform:scaleX(0.919)">Range</span>
<div class="cb" style="left:435px;top:187px;width:89px;height:21px;"><span class="t" style="left:4px;top:0.5px;transform:scaleX(0.867)">Medium</span><svg class="chev" width="11" height="7" viewBox="0 0 11 7"><path d="M0.5 0.8 L5.5 5.8 L10.5 0.8" fill="none" stroke="#707070" stroke-width="1"/></svg></div>
<div class="ro" style="left:324px;top:214px;width:60px;height:16px;"><span class="t r" style="right:1.5px;top:0px">145.236</span></div>
<span class="t " style="left:436px;top:214px;transform:scaleX(0.894)">Machinery weight</span>
<div class="ro" style="left:540px;top:214px;width:59px;height:16px;"><span class="t r" style="right:1.5px;top:0px">4.762</span></div>
<div class="ro" style="left:604px;top:214px;width:56px;height:16px;"><span class="t r" style="right:1.5px;top:0px">28.041</span></div>
<div class="cb" style="left:324px;top:238px;width:81px;height:21px;"><span class="t" style="left:3.5px;top:0.5px;transform:scaleX(0.840)">Normal</span><svg class="chev" width="11" height="7" viewBox="0 0 11 7"><path d="M0.5 0.8 L5.5 5.8 L10.5 0.8" fill="none" stroke="#707070" stroke-width="1"/></svg></div>
<span class="t " style="left:411px;top:241px;transform:scaleX(0.873)">Propulsion</span>
<div class="cb" style="left:468px;top:238px;width:95px;height:21px;"><span class="t" style="left:3.5px;top:0.5px;transform:scaleX(0.885)">Oil + Turbine</span><svg class="chev" width="11" height="7" viewBox="0 0 11 7"><path d="M0.5 0.8 L5.5 5.8 L10.5 0.8" fill="none" stroke="#707070" stroke-width="1"/></svg></div>
<div class="k k1" style="left:573px;top:239px;width:15px;height:15px;"><svg width="15" height="15" viewBox="0 0 15 15"><path d="M2.6 7.6 L6 11 L12.4 3.6" fill="none" stroke="#fff" stroke-width="1.3"/></svg></div>
<span class="t" style="left:592.5px;top:240px;width:76px;overflow:hidden;transform:scaleX(0.912)">Unit machinery</span>
<div class="cb" style="left:324px;top:265px;width:61px;height:21px;"><span class="t" style="left:3.5px;top:0.5px">16</span><svg class="chev" width="11" height="7" viewBox="0 0 11 7"><path d="M0.5 0.8 L5.5 5.8 L10.5 0.8" fill="none" stroke="#707070" stroke-width="1"/></svg></div>
<span class="t " style="left:394px;top:267px">V</span>
<div class="k k0" style="left:421px;top:268px;width:15px;height:15px;"></div>
<span class="t " style="left:440px;top:269px;transform:scaleX(0.897)">Magazine box</span>
<div class="ro" style="left:540px;top:265px;width:59px;height:16px;"><span class="t r" style="right:1.5px;top:0px">15.405</span></div>
<div class="cb" style="left:324px;top:289px;width:89px;height:21px;"><span class="t" style="left:3.5px;top:0.5px;transform:scaleX(0.840)">Normal</span><svg class="chev" width="11" height="7" viewBox="0 0 11 7"><path d="M0.5 0.8 L5.5 5.8 L10.5 0.8" fill="none" stroke="#707070" stroke-width="1"/></svg></div>
<div class="k k1" style="left:421px;top:292px;width:15px;height:15px;"><svg width="15" height="15" viewBox="0 0 15 15"><path d="M2.6 7.6 L6 11 L12.4 3.6" fill="none" stroke="#fff" stroke-width="1.3"/></svg></div>
<span class="t " style="left:440px;top:293px;transform:scaleX(0.898)">Inclined belt</span>
<div class="cb" style="left:324px;top:313px;width:61px;height:21px;"><span class="t" style="left:3.5px;top:0.5px">4</span><svg class="chev" width="11" height="7" viewBox="0 0 11 7"><path d="M0.5 0.8 L5.5 5.8 L10.5 0.8" fill="none" stroke="#707070" stroke-width="1"/></svg></div>
<div class="cb" style="left:324px;top:337px;width:61px;height:21px;"><span class="t" style="left:3.5px;top:0.5px">0</span><svg class="chev" width="11" height="7" viewBox="0 0 11 7"><path d="M0.5 0.8 L5.5 5.8 L10.5 0.8" fill="none" stroke="#707070" stroke-width="1"/></svg></div>
<div class="cb" style="left:324px;top:361px;width:61px;height:21px;"><span class="t" style="left:3.5px;top:0.5px">4</span><svg class="chev" width="11" height="7" viewBox="0 0 11 7"><path d="M0.5 0.8 L5.5 5.8 L10.5 0.8" fill="none" stroke="#707070" stroke-width="1"/></svg></div>
<div class="cb" style="left:324px;top:385px;width:61px;height:21px;"><span class="t" style="left:3.5px;top:0.5px">4</span><svg class="chev" width="11" height="7" viewBox="0 0 11 7"><path d="M0.5 0.8 L5.5 5.8 L10.5 0.8" fill="none" stroke="#707070" stroke-width="1"/></svg></div>
<div class="cb" style="left:324px;top:409px;width:61px;height:21px;"><span class="t" style="left:3.5px;top:0.5px">20</span><svg class="chev" width="11" height="7" viewBox="0 0 11 7"><path d="M0.5 0.8 L5.5 5.8 L10.5 0.8" fill="none" stroke="#707070" stroke-width="1"/></svg></div>
<div class="cb" style="left:324px;top:433px;width:61px;height:21px;"><span class="t" style="left:3.5px;top:0.5px">26</span><svg class="chev" width="11" height="7" viewBox="0 0 11 7"><path d="M0.5 0.8 L5.5 5.8 L10.5 0.8" fill="none" stroke="#707070" stroke-width="1"/></svg></div>
<div class="cb" style="left:324px;top:457px;width:61px;height:21px;"><span class="t" style="left:3.5px;top:0.5px">5.5</span><svg class="chev" width="11" height="7" viewBox="0 0 11 7"><path d="M0.5 0.8 L5.5 5.8 L10.5 0.8" fill="none" stroke="#707070" stroke-width="1"/></svg></div>
<div class="cb" style="left:324px;top:481px;width:61px;height:21px;"><span class="t" style="left:3.5px;top:0.5px">2</span><svg class="chev" width="11" height="7" viewBox="0 0 11 7"><path d="M0.5 0.8 L5.5 5.8 L10.5 0.8" fill="none" stroke="#707070" stroke-width="1"/></svg></div>
<span class="t " style="left:436px;top:315px;transform:scaleX(0.908)">weight</span>
<div class="ro" style="left:540px;top:316px;width:59px;height:16px;"><span class="t r" style="right:1.5px;top:0px">772</span></div>
<span class="t " style="left:436px;top:339px;transform:scaleX(0.908)">weight</span>
<div class="ro" style="left:540px;top:340px;width:59px;height:16px;"><span class="t r" style="right:1.5px;top:0px">0</span></div>
<span class="t " style="left:436px;top:362px;transform:scaleX(0.908)">weight</span>
<div class="ro" style="left:540px;top:363px;width:59px;height:16px;"><span class="t r" style="right:1.5px;top:0px">9.562</span></div>
<span class="t " style="left:436px;top:386px;transform:scaleX(0.908)">weight</span>
<div class="ro" style="left:540px;top:386px;width:59px;height:16px;"><span class="t r" style="right:1.5px;top:0px">1.815</span></div>
<span class="t " style="left:436px;top:410px;transform:scaleX(0.908)">weight</span>
<div class="ro" style="left:540px;top:410px;width:59px;height:16px;"><span class="t r" style="right:1.5px;top:0px">1.352</span></div>
<span class="t " style="left:436.5px;top:505px;transform:scaleX(0.885)">Total armour</span>
<div class="ro" style="left:540px;top:505px;width:59px;height:16px;"><span class="t r" style="right:1.5px;top:0px">29.676</span></div>
<div class="ro" style="left:604px;top:505px;width:56px;height:16px;"><span class="t r" style="right:1.5px;top:0px">107.904</span></div>
<div class="ro" style="left:324px;top:529px;width:104px;height:16px;"><span class="t" style="left:1px;top:0px;transform:scaleX(0.885)">All or nothing</span></div>
<div class="raised" style="left:432px;top:527px;width:19.5px;height:19.5px;"><svg width="17" height="17" viewBox="0 0 17 17" style="position:absolute;left:0;top:0"><path d="M2 13.5 V5.5 H15 V13.5" fill="none" stroke="#000" stroke-width="2"/></svg></div>
<div class="btn " style="left:456px;top:529px;width:37px;height:16.5px;"><span class="c" style="transform:translate(-50%,-50%) scaleX(0.868)">Change</span></div>
<div class="ro" style="left:556px;top:529px;width:43px;height:16px;"><span class="t r" style="right:1.5px;top:0px">40%</span></div>
<div class="ro" style="left:604px;top:529px;width:56px;height:16px;"><span class="t r" style="right:1.5px;top:0px">0</span></div>
<span class="t " style="left:435.5px;top:553px;transform:scaleX(0.867)">Armament</span>
<div class="ro" style="left:540px;top:553.5px;width:59px;height:16px;"><span class="t r" style="right:1.5px;top:0px">17.541</span></div>
<div class="ro" style="left:604px;top:553.5px;width:56px;height:16px;"><span class="t r" style="right:1.5px;top:0px">86.283</span></div>
<div class="ro" style="left:556px;top:573.5px;width:43px;height:16px;"><span class="t r" style="right:1.5px;top:0px">23%</span></div>
<div class="sp" style="left:332px;top:588px;width:49px;height:22px;"><span class="t" style="left:1.5px;top:0.5px">4</span><i class="sb"><svg class="arr" width="9" height="15" viewBox="0 0 9 15"><path d="M0.3 5.6 L4.5 1.2 L8.7 5.6 Z M0.3 9.4 L4.5 13.8 L8.7 9.4 Z" fill="#000"/></svg></i></div>
<span class="t " style="left:436px;top:593px;transform:scaleX(0.904)">TPS weight</span>
<div class="ro" style="left:540px;top:593px;width:59px;height:16px;"><span class="t r" style="right:1.5px;top:0px">2.491</span></div>
<div class="ro" style="left:604px;top:593px;width:56px;height:16px;"><span class="t r" style="right:1.5px;top:0px">4.982</span></div>
<div class="cb" style="left:332px;top:617px;width:89px;height:21px;"><span class="t" style="left:4.5px;top:0.5px;transform:scaleX(0.840)">Normal</span><svg class="chev" width="11" height="7" viewBox="0 0 11 7"><path d="M0.5 0.8 L5.5 5.8 L10.5 0.8" fill="none" stroke="#707070" stroke-width="1"/></svg></div>
<span class="t " style="left:435.5px;top:617px;transform:scaleX(0.907)">Accomodation space</span>
<div class="ro" style="left:540px;top:617px;width:59px;height:16px;"><span class="t r" style="right:1.5px;top:0px">1.142</span></div>
<div class="ro" style="left:332px;top:644px;width:59.5px;height:16px;"><span class="t r" style="right:1.5px;top:0px">1.870</span></div>
<span class="t " style="left:436px;top:641px;transform:scaleX(0.901)">Incidental costs</span>
<div class="ro" style="left:604px;top:640.5px;width:56px;height:16px;"><span class="t r" style="right:1.5px;top:0px">15.902</span></div>
<div class="hsep" style="left:540px;top:657.5px;width:121px;height:2px;"></div>
<span class="t " style="left:436px;top:665px;transform:scaleX(0.930)">Total</span>
<div class="ro" style="left:540px;top:665px;width:59px;height:16px;"><span class="t r" style="right:1.5px;top:0px">74.999</span></div>
<div class="ro" style="left:604px;top:665px;width:56px;height:16px;"><span class="t r" style="right:1.5px;top:0px">305.869</span></div>
<span class="t " style="left:436px;top:689px;transform:scaleX(0.886)">Weight remaining</span>
<div class="ro" style="left:540px;top:689px;width:59px;height:16px;"><span class="t r" style="right:1.5px;top:0px">1</span></div>
<span class="t " style="left:436px;top:714px;transform:scaleX(0.883)">Time, monthly cost</span>
<div class="ro" style="left:540px;top:713px;width:59px;height:16px;"><span class="t r" style="right:1.5px;top:0px">33</span></div>
<div class="ro" style="left:604px;top:713px;width:56px;height:16px;"><span class="t r" style="right:1.5px;top:0px">9.269</span></div>
<div class="k k0" style="left:245px;top:671px;width:15px;height:15px;"></div>
<span class="t " style="left:264px;top:672px;transform:scaleX(0.879)">Colonial service</span>
<div class="k k1" style="left:272px;top:743px;width:15px;height:15px;"><svg width="15" height="15" viewBox="0 0 15 15"><path d="M2.6 7.6 L6 11 L12.4 3.6" fill="none" stroke="#fff" stroke-width="1.3"/></svg></div>
<span class="t " style="left:291px;top:744px;transform:scaleX(0.899)">Use national deck colours</span>
<!-- tab control -->
<div class="tab sel" style="left:678px;top:36px;width:42px;height:20px;"><span class="t" style="left:8.5px;top:4px;transform:scaleX(0.889)">Guns</span></div>
<div class="tab" style="left:720px;top:38px;width:161px;height:18px;"><span class="t" style="left:6px;top:2px;transform:scaleX(0.872)">Additional armament</span><span class="t" style="left:113.5px;top:2px;transform:scaleX(0.885)">Graphics</span></div>
<div class="tabpanel" style="left:676px;top:56px;width:671px;height:620px;"><div class="tabinner"></div></div>
<div class="gb" style="left:684px;top:68px;width:320px;height:433px;"></div>
<span class="t gl" style="left:691.5px;top:60.5px;transform:scaleX(0.894)">Main guns</span>
<span class="t " style="left:692px;top:82.5px;transform:scaleX(0.855)">Calibre</span>
<div class="sp" style="left:731px;top:80px;width:49px;height:22px;"><span class="t" style="left:1.5px;top:0.5px">18</span><i class="sb"><svg class="arr" width="9" height="15" viewBox="0 0 9 15"><path d="M0.3 5.6 L4.5 1.2 L8.7 5.6 Z M0.3 9.4 L4.5 13.8 L8.7 9.4 Z" fill="#000"/></svg></i></div>
<span class="t " style="left:788px;top:82.5px;transform:scaleX(0.870)">Quality</span>
<div class="ro" style="left:827px;top:82px;width:24.5px;height:16px;"><span class="t r" style="right:1.5px;top:0px">-1</span></div>
<div class="btn " style="left:937px;top:80px;width:57px;height:17px;"><span class="c" style="transform:translate(-50%,-50%) scaleX(0.911)">Gun data</span></div>
<div class="lb" style="left:691px;top:109px;width:305px;height:152.5px;"><div class="lvh"></div><i class="lvs" style="left:149.5px"></i><i class="lvs" style="left:219.5px"></i><i class="lvs" style="left:294.5px"></i><span class="t" style="left:7.5px;top:5px;transform:scaleX(0.878)">Position</span><span class="t" style="left:157.5px;top:5px;transform:scaleX(0.908)">Guns/turret</span><span class="t" style="left:227px;top:5px;transform:scaleX(0.930)">Weight/turret</span><span class="t" style="left:6px;top:25.5px;transform:scaleX(0.887)">A - Forward</span><span class="t" style="left:157px;top:25.5px">3</span><span class="t" style="left:226.5px;top:25.5px">5316</span><span class="t" style="left:6px;top:42.5px;transform:scaleX(0.924)">Y - Aft</span><span class="t" style="left:157px;top:42.5px">3</span><span class="t" style="left:226.5px;top:42.5px">5316</span><span class="t" style="left:6px;top:59.5px;transform:scaleX(0.870)">B - Forward superimposed</span><span class="t" style="left:157px;top:59.5px">3</span><span class="t" style="left:226.5px;top:59.5px">5848</span></div>
<div class="btn " style="left:691px;top:269px;width:65px;height:17px;"><span class="c" style="transform:translate(-50%,-50%) scaleX(0.892)">Add turret</span></div>
<div class="btn " style="left:771px;top:269px;width:65px;height:17px;"><span class="c" style="transform:translate(-50%,-50%) scaleX(0.886)">Delete turret</span></div>
<div class="btn " style="left:851px;top:269px;width:65px;height:17px;"><span class="c" style="transform:translate(-50%,-50%) scaleX(0.871)">Clear turrets</span></div>
<div class="btn dis" style="left:931px;top:269px;width:65px;height:17px;"><span class="c" style="transform:translate(-50%,-50%) scaleX(0.897)">Rebuild?</span></div>
<span class="t " style="left:692px;top:297px;transform:scaleX(0.896)">Rounds per gun</span>
<div class="sp" style="left:779px;top:293px;width:49px;height:22px;"><span class="t" style="left:1.5px;top:0.5px">100</span><i class="sb"><svg class="arr" width="9" height="15" viewBox="0 0 9 15"><path d="M0.3 5.6 L4.5 1.2 L8.7 5.6 Z M0.3 9.4 L4.5 13.8 L8.7 9.4 Z" fill="#000"/></svg></i></div>
<span class="t " style="left:838px;top:298px;transform:scaleX(0.876)">ammo weight</span>
<div class="ro" style="left:915px;top:297px;width:48.5px;height:16px;"><span class="t r" style="right:1.5px;top:0px">3392</span></div>
<span class="t " style="left:692px;top:326px;transform:scaleX(0.883)">Fire control</span>
<div class="cb" style="left:751px;top:323px;width:129px;height:21px;"><span class="t" style="left:3px;top:0.5px;transform:scaleX(0.910)">Advanced director</span><svg class="chev" width="11" height="7" viewBox="0 0 11 7"><path d="M0.5 0.8 L5.5 5.8 L10.5 0.8" fill="none" stroke="#707070" stroke-width="1"/></svg></div>
<span class="t " style="left:892px;top:324px;transform:scaleX(0.860)">FC Positions</span>
<div class="sp" style="left:955px;top:321px;width:41px;height:22px;"><span class="t" style="left:1.5px;top:0.5px">3</span><i class="sb"><svg class="arr" width="9" height="15" viewBox="0 0 9 15"><path d="M0.3 5.6 L4.5 1.2 L8.7 5.6 Z M0.3 9.4 L4.5 13.8 L8.7 9.4 Z" fill="#000"/></svg></i></div>
<span class="t " style="left:693px;top:350px;transform:scaleX(0.908)">weight</span>
<div class="ro" style="left:753px;top:350px;width:40.5px;height:16px;"><span class="t r" style="right:1.5px;top:0px">242</span></div>
<span class="t " style="left:805px;top:350px;transform:scaleX(0.930)">cost</span>
<div class="ro" style="left:835px;top:350px;width:40.5px;height:16px;"><span class="t r" style="right:1.5px;top:0px">3.000</span></div>
<div class="k k1" style="left:700px;top:378.5px;width:15px;height:15px;"><svg width="15" height="15" viewBox="0 0 15 15"><path d="M2.6 7.6 L6 11 L12.4 3.6" fill="none" stroke="#fff" stroke-width="1.3"/></svg></div>
<span class="t " style="left:719px;top:379px;transform:scaleX(0.898)">Increased elevation</span>
<div class="k k2" style="left:836px;top:379.5px;width:15px;height:15px;"></div>
<span class="t g" style="left:855px;top:380px">DP</span>
<div class="k k0" style="left:700px;top:400px;width:15px;height:15px;"></div>
<span class="t " style="left:719px;top:401px;transform:scaleX(0.868)">Cross deck fire</span>
<div class="k k2" style="left:836px;top:400px;width:15px;height:15px;"></div>
<span class="t g" style="left:854.5px;top:401px;transform:scaleX(0.896)">Autoloader</span>
<div class="bline" style="left:686px;top:421px;width:315px;height:1px;"></div>
<span class="t " style="left:694.5px;top:425px;transform:scaleX(0.881)">Turret era</span>
<div class="cb" style="left:696px;top:441px;width:164px;height:21px;"><span class="t" style="left:3.5px;top:0.5px;transform:scaleX(0.898)">Late dreadnought</span><svg class="chev" width="11" height="7" viewBox="0 0 11 7"><path d="M0.5 0.8 L5.5 5.8 L10.5 0.8" fill="none" stroke="#707070" stroke-width="1"/></svg></div>
<span class="t " style="left:875px;top:444px;transform:scaleX(0.881)">Sponson radius</span>
<div class="ro" style="left:955px;top:441px;width:16.5px;height:16px;"><span class="t r" style="right:1.5px;top:0px">6</span></div>
<svg class="abs" style="left:983px;top:441px" width="9" height="18" viewBox="0 0 9 18"><path d="M0.3 5.6 L4.5 1 L8.7 5.6 Z M0.3 12.4 L4.5 17 L8.7 12.4 Z" fill="#000"/></svg>
<div class="k k0" style="left:694px;top:470px;width:15px;height:15px;"></div>
<span class="t " style="left:712.5px;top:471px;transform:scaleX(0.864)">Asymmetric turret positions</span>
<div class="gb" style="left:688px;top:512.5px;width:313px;height:132.5px;"></div>
<span class="t gl" style="left:696.5px;top:505px;transform:scaleX(0.880)">Medium and light anti aircraft guns</span>
<span class="t " style="left:840.5px;top:518px;transform:scaleX(0.930)">Weight</span>
<span class="t " style="left:880px;top:518px;transform:scaleX(0.871)">Cost</span>
<span class="t " style="left:696px;top:536px;transform:scaleX(0.906)">Light AA guns</span>
<div class="sp" style="left:780px;top:533px;width:49px;height:22px;"><span class="t" style="left:1.5px;top:0.5px">100</span><i class="sb"><svg class="arr" width="9" height="15" viewBox="0 0 9 15"><path d="M0.3 5.6 L4.5 1.2 L8.7 5.6 Z M0.3 9.4 L4.5 13.8 L8.7 9.4 Z" fill="#000"/></svg></i></div>
<div class="ro" style="left:838px;top:535px;width:30.5px;height:16px;"><span class="t r" style="right:1.5px;top:0px">135</span></div>
<div class="ro" style="left:876px;top:535px;width:32.5px;height:16px;"><span class="t r" style="right:1.5px;top:0px">270</span></div>
<div class="k k2" style="left:922px;top:537px;width:15px;height:15px;"></div>
<span class="t g" style="left:941px;top:537px;transform:scaleX(0.878)">CIWS</span>
<span class="t " style="left:696px;top:566.5px;transform:scaleX(0.888)">Medium AA guns</span>
<div class="sp" style="left:780px;top:563px;width:49px;height:22px;"><span class="t" style="left:1.5px;top:0.5px">0</span><i class="sb"><svg class="arr" width="9" height="15" viewBox="0 0 9 15"><path d="M0.3 5.6 L4.5 1.2 L8.7 5.6 Z M0.3 9.4 L4.5 13.8 L8.7 9.4 Z" fill="#000"/></svg></i></div>
<div class="ro" style="left:838px;top:565px;width:30.5px;height:16px;"><span class="t r" style="right:1.5px;top:0px">0</span></div>
<div class="ro" style="left:876px;top:565px;width:32.5px;height:16px;"><span class="t r" style="right:1.5px;top:0px">0</span></div>
<div class="k k0" style="left:923px;top:567px;width:15px;height:15px;"></div>
<span class="t " style="left:942px;top:567px;transform:scaleX(0.871)">Radar dir</span>
<span class="t " style="left:695.5px;top:594px;transform:scaleX(0.896)">AA directors</span>
<div class="sp" style="left:780px;top:592px;width:49px;height:22px;"><span class="t" style="left:1.5px;top:0.5px">4</span><i class="sb"><svg class="arr" width="9" height="15" viewBox="0 0 9 15"><path d="M0.3 5.6 L4.5 1.2 L8.7 5.6 Z M0.3 9.4 L4.5 13.8 L8.7 9.4 Z" fill="#000"/></svg></i></div>
<div class="ro" style="left:838px;top:594px;width:30.5px;height:16px;"><span class="t r" style="right:1.5px;top:0px">104</span></div>
<div class="ro" style="left:876px;top:594px;width:32.5px;height:16px;"><span class="t r" style="right:1.5px;top:0px">208</span></div>
<span class="t " style="left:682px;top:656px;transform:scaleX(0.911)">HAA factor: 65</span>
<div class="btn " style="left:898px;top:653px;width:105px;height:18.5px;"><span class="c" style="transform:translate(-50%,-50%) scaleX(0.853)">Clear all armament</span></div>
<span class="t " style="left:676.5px;top:684px;transform:scaleX(0.905)">Topside load and capacity</span>
<div class="ro" style="left:820px;top:685px;width:84.5px;height:16px;"><span class="t r" style="right:1.5px;top:0px;transform:scaleX(0.917)">320 of 320</span></div>
<div class="btn " style="left:916px;top:685px;width:97px;height:17px;"><span class="c" style="transform:translate(-50%,-50%) scaleX(0.913)">Topside load</span></div>
<!-- secondary guns -->
<div class="gb" style="left:1011.5px;top:68px;width:320.5px;height:287px;"></div>
<span class="t gl" style="left:1019.5px;top:60.5px;transform:scaleX(0.894)">Secondary guns</span>
<span class="t " style="left:1019px;top:83px;transform:scaleX(0.855)">Calibre</span>
<div class="sp" style="left:1067px;top:80px;width:49px;height:22px;"><span class="t" style="left:1.5px;top:0.5px">5</span><i class="sb"><svg class="arr" width="9" height="15" viewBox="0 0 9 15"><path d="M0.3 5.6 L4.5 1.2 L8.7 5.6 Z M0.3 9.4 L4.5 13.8 L8.7 9.4 Z" fill="#000"/></svg></i></div>
<span class="t " style="left:1127px;top:83px;transform:scaleX(0.879)">Number</span>
<div class="sp" style="left:1171px;top:79px;width:49px;height:22px;"><span class="t" style="left:1.5px;top:0.5px">24</span><i class="sb"><svg class="arr" width="9" height="15" viewBox="0 0 9 15"><path d="M0.3 5.6 L4.5 1.2 L8.7 5.6 Z M0.3 9.4 L4.5 13.8 L8.7 9.4 Z" fill="#000"/></svg></i></div>
<span class="t " style="left:1228px;top:82px;transform:scaleX(0.870)">Quality</span>
<div class="ro" style="left:1267px;top:82px;width:24.5px;height:16px;"><span class="t r" style="right:1.5px;top:0px">0</span></div>
<span class="t " style="left:1019px;top:115px;transform:scaleX(0.907)">Guns / turret</span>
<div class="cb" style="left:1087px;top:113px;width:66px;height:21px;"><span class="t" style="left:3.5px;top:0.5px">2</span><svg class="chev" width="11" height="7" viewBox="0 0 11 7"><path d="M0.5 0.8 L5.5 5.8 L10.5 0.8" fill="none" stroke="#707070" stroke-width="1"/></svg></div>
<span class="t " style="left:1164px;top:117px;transform:scaleX(0.908)">weight</span>
<div class="ro" style="left:1202px;top:115px;width:42.5px;height:16px;"><span class="t r" style="right:1.5px;top:0px">852</span></div>
<span class="t " style="left:1020px;top:142px;transform:scaleX(0.896)">Rounds per gun</span>
<div class="sp" style="left:1105px;top:140px;width:49px;height:22px;"><span class="t" style="left:1.5px;top:0.5px">210</span><i class="sb"><svg class="arr" width="9" height="15" viewBox="0 0 9 15"><path d="M0.3 5.6 L4.5 1.2 L8.7 5.6 Z M0.3 9.4 L4.5 13.8 L8.7 9.4 Z" fill="#000"/></svg></i></div>
<span class="t " style="left:1164px;top:142px;transform:scaleX(0.908)">weight</span>
<div class="ro" style="left:1202px;top:139px;width:42.5px;height:16px;"><span class="t r" style="right:1.5px;top:0px">558</span></div>
<div class="k k2" style="left:1258px;top:112px;width:15px;height:15px;"></div>
<span class="t g" style="left:1276.5px;top:113px;transform:scaleX(0.896)">Autoloader</span>
<div class="k k1" style="left:1258px;top:130px;width:15px;height:15px;"><svg width="15" height="15" viewBox="0 0 15 15"><path d="M2.6 7.6 L6 11 L12.4 3.6" fill="none" stroke="#fff" stroke-width="1.3"/></svg></div>
<span class="t " style="left:1276.5px;top:131px;transform:scaleX(0.893)">Director</span>
<div class="k k1" style="left:1258px;top:148px;width:15px;height:15px;"><svg width="15" height="15" viewBox="0 0 15 15"><path d="M2.6 7.6 L6 11 L12.4 3.6" fill="none" stroke="#fff" stroke-width="1.3"/></svg></div>
<span class="t " style="left:1276.5px;top:149px">DP</span>
<div class="lb" style="left:1019px;top:168px;width:305px;height:103px;"><span class="t" style="left:2px;top:0px;transform:scaleX(0.881)">F - Port wing, 2 guns</span><span class="t" style="left:2px;top:13px;transform:scaleX(0.882)">G - Starboard wing, 2 guns</span><span class="t" style="left:2px;top:26px;transform:scaleX(0.882)">J - Port wing, 2 guns</span><span class="t" style="left:2px;top:39px;transform:scaleX(0.883)">K - Starboard wing, 2 guns</span><span class="t" style="left:2px;top:52px;transform:scaleX(0.885)">D - Port forward wing, 2 guns</span><span class="t" style="left:2px;top:65px;transform:scaleX(0.884)">E - Starboard forward wing, 2 guns</span><span class="t" style="left:2px;top:78px;transform:scaleX(0.886)">S - Port aft wing, 2 guns</span><span class="t" style="left:2px;top:91px;transform:scaleX(0.874)">T - Starboard aft wing, 2 guns</span><div class="sbar"><svg class="abs" style="left:3px;top:5.5px" width="11" height="7" viewBox="0 0 11 7"><path d="M1.5 5.5 L5.5 1.5 L9.5 5.5" fill="none" stroke="#686868" stroke-width="1.2"/></svg><svg class="abs" style="left:3px;top:87px" width="11" height="7" viewBox="0 0 11 7"><path d="M1.5 1.5 L5.5 5.5 L9.5 1.5" fill="none" stroke="#686868" stroke-width="1.2"/></svg><i class="thumb" style="top:17px;height:38px"></i></div></div>
<span class="t " style="left:1018px;top:274px;transform:scaleX(0.881)">Turret era</span>
<div class="cb" style="left:1019px;top:289px;width:164px;height:21px;"><span class="t" style="left:2.5px;top:0.5px;transform:scaleX(0.915)">Victorian</span><svg class="chev" width="11" height="7" viewBox="0 0 11 7"><path d="M0.5 0.8 L5.5 5.8 L10.5 0.8" fill="none" stroke="#707070" stroke-width="1"/></svg></div>
<span class="t " style="left:1203px;top:290px;transform:scaleX(0.881)">Sponson radius</span>
<div class="ro" style="left:1277px;top:287px;width:16.5px;height:16px;"><span class="t r" style="right:1.5px;top:0px">8</span></div>
<svg class="abs" style="left:1302.5px;top:287px" width="9" height="18" viewBox="0 0 9 18"><path d="M0.3 5.6 L4.5 1 L8.7 5.6 Z M0.3 12.4 L4.5 17 L8.7 12.4 Z" fill="#000"/></svg>
<div class="btn " style="left:1193px;top:311px;width:128px;height:17px;"><span class="c" style="transform:translate(-50%,-50%) scaleX(0.917)">Auto place</span></div>
<div class="btn " style="left:1193px;top:333px;width:128px;height:17px;"><span class="c" style="transform:translate(-50%,-50%) scaleX(0.892)">Add odd centreline mount</span></div>
<div class="k k1" style="left:1019px;top:321px;width:15px;height:15px;"><svg width="15" height="15" viewBox="0 0 15 15"><path d="M2.6 7.6 L6 11 L12.4 3.6" fill="none" stroke="#fff" stroke-width="1.3"/></svg></div>
<span class="t " style="left:1037.5px;top:322px;transform:scaleX(0.872)">Asymmetric secondary mounts</span>
<!-- tertiary guns -->
<div class="gb" style="left:1011.5px;top:373px;width:320.5px;height:296.5px;"></div>
<span class="t gl" style="left:1020px;top:365.5px;transform:scaleX(0.888)">Tertiary guns</span>
<span class="t " style="left:1021px;top:387px;transform:scaleX(0.855)">Calibre</span>
<div class="sp" style="left:1067px;top:384px;width:49px;height:22px;"><span class="t" style="left:1.5px;top:0.5px">2</span><i class="sb"><svg class="arr" width="9" height="15" viewBox="0 0 9 15"><path d="M0.3 5.6 L4.5 1.2 L8.7 5.6 Z M0.3 9.4 L4.5 13.8 L8.7 9.4 Z" fill="#000"/></svg></i></div>
<span class="t " style="left:1127px;top:387px;transform:scaleX(0.879)">Number</span>
<div class="sp" style="left:1171px;top:383px;width:49px;height:22px;"><span class="t" style="left:1.5px;top:0.5px">20</span><i class="sb"><svg class="arr" width="9" height="15" viewBox="0 0 9 15"><path d="M0.3 5.6 L4.5 1.2 L8.7 5.6 Z M0.3 9.4 L4.5 13.8 L8.7 9.4 Z" fill="#000"/></svg></i></div>
<span class="t " style="left:1228px;top:386px;transform:scaleX(0.870)">Quality</span>
<div class="ro" style="left:1267px;top:386px;width:24.5px;height:16px;"><span class="t r" style="right:1.5px;top:0px">1</span></div>
<span class="t " style="left:1021px;top:419px;transform:scaleX(0.907)">Guns / turret</span>
<div class="cb" style="left:1089px;top:417px;width:66px;height:21px;"><span class="t" style="left:3.5px;top:0.5px">2</span><svg class="chev" width="11" height="7" viewBox="0 0 11 7"><path d="M0.5 0.8 L5.5 5.8 L10.5 0.8" fill="none" stroke="#707070" stroke-width="1"/></svg></div>
<span class="t " style="left:1163px;top:421px;transform:scaleX(0.908)">weight</span>
<div class="ro" style="left:1202px;top:419px;width:42.5px;height:16px;"><span class="t r" style="right:1.5px;top:0px">20</span></div>
<span class="t " style="left:1020px;top:446px;transform:scaleX(0.896)">Rounds per gun</span>
<div class="sp" style="left:1105px;top:444px;width:49px;height:22px;"><span class="t" style="left:1.5px;top:0.5px">250</span><i class="sb"><svg class="arr" width="9" height="15" viewBox="0 0 9 15"><path d="M0.3 5.6 L4.5 1.2 L8.7 5.6 Z M0.3 9.4 L4.5 13.8 L8.7 9.4 Z" fill="#000"/></svg></i></div>
<span class="t " style="left:1164px;top:446px;transform:scaleX(0.908)">weight</span>
<div class="ro" style="left:1202px;top:443px;width:42.5px;height:16px;"><span class="t r" style="right:1.5px;top:0px">43</span></div>
<div class="k k2" style="left:1258px;top:416px;width:15px;height:15px;"></div>
<span class="t g" style="left:1276.5px;top:417px;transform:scaleX(0.896)">Autoloader</span>
<div class="k k2" style="left:1258px;top:440px;width:15px;height:15px;"></div>
<span class="t g" style="left:1276.5px;top:441px">DP</span>
<div class="lb" style="left:1019px;top:483px;width:305px;height:104.5px;"><span class="t" style="left:2px;top:0px;transform:scaleX(0.901)">Mount, 1 2 guns</span><span class="t" style="left:2px;top:13px;transform:scaleX(0.901)">Mount, 2 2 guns</span><span class="t" style="left:2px;top:26px;transform:scaleX(0.901)">Mount, 3 2 guns</span><span class="t" style="left:2px;top:39px;transform:scaleX(0.901)">Mount, 4 2 guns</span><span class="t" style="left:2px;top:52px;transform:scaleX(0.901)">Mount, 5 2 guns</span><span class="t" style="left:2px;top:65px;transform:scaleX(0.901)">Mount, 6 2 guns</span><span class="t" style="left:2px;top:78px;transform:scaleX(0.901)">Mount, 7 2 guns</span><span class="t" style="left:2px;top:91px;transform:scaleX(0.901)">Mount, 8 2 guns</span><div class="sbar"><svg class="abs" style="left:3px;top:5.5px" width="11" height="7" viewBox="0 0 11 7"><path d="M1.5 5.5 L5.5 1.5 L9.5 5.5" fill="none" stroke="#686868" stroke-width="1.2"/></svg><svg class="abs" style="left:3px;top:88.5px" width="11" height="7" viewBox="0 0 11 7"><path d="M1.5 1.5 L5.5 5.5 L9.5 1.5" fill="none" stroke="#686868" stroke-width="1.2"/></svg><i class="thumb" style="top:17px;height:20px"></i></div></div>
<span class="t " style="left:1020.5px;top:593px;transform:scaleX(0.881)">Turret era</span>
<div class="cb" style="left:1021px;top:609px;width:164px;height:21px;"><span class="t" style="left:3.5px;top:0.5px;transform:scaleX(0.901)">Dreadnought</span><svg class="chev" width="11" height="7" viewBox="0 0 11 7"><path d="M0.5 0.8 L5.5 5.8 L10.5 0.8" fill="none" stroke="#707070" stroke-width="1"/></svg></div>
<span class="t " style="left:1203px;top:602px;transform:scaleX(0.881)">Sponson radius</span>
<div class="ro" style="left:1278px;top:599px;width:16.5px;height:16px;"><span class="t r" style="right:1.5px;top:0px">8</span></div>
<svg class="abs" style="left:1302.5px;top:599px" width="9" height="18" viewBox="0 0 9 18"><path d="M0.3 5.6 L4.5 1 L8.7 5.6 Z M0.3 12.4 L4.5 17 L8.7 12.4 Z" fill="#000"/></svg>
<div class="btn " style="left:1195px;top:629px;width:129px;height:17px;"><span class="c" style="transform:translate(-50%,-50%) scaleX(0.893)">Add mount graphic</span></div>
<div class="btn " style="left:1195px;top:648px;width:129px;height:17px;"><span class="c" style="transform:translate(-50%,-50%) scaleX(0.865)">Clear tertiary graphics</span></div>
<div class="btn" style="left:1236px;top:682px;width:111px;height:30px;"><svg class="abs" style="left:7px;top:7px" width="16" height="17" viewBox="0 0 16 17"><path d="M0 4.5 H7.5 V0 L16 8.5 L7.5 17 V12.5 H0 Z" fill="#3c7fc0"/></svg><span class="t" style="left:35.5px;top:9px;transform:scaleX(0.896)">Save and finish</span></div>
</body></html>
